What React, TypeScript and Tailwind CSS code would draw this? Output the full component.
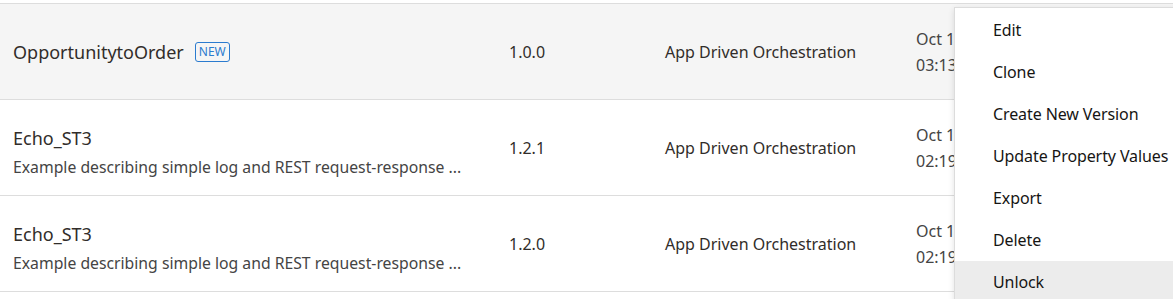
import { useState } from "react";

type Row = {
  name: string;
  desc?: string;
  isNew?: boolean;
  version: string;
  pattern: string;
  date: string;
  time: string;
};

const rows: Row[] = [
  { name: "OpportunitytoOrder", isNew: true, version: "1.0.0", pattern: "App Driven Orchestration", date: "Oct 1", time: "03:13" },
  {
    name: "Echo_ST3",
    desc: "Example describing simple log and REST request-response ...",
    version: "1.2.1",
    pattern: "App Driven Orchestration",
    date: "Oct 1",
    time: "02:19",
  },
  {
    name: "Echo_ST3",
    desc: "Example describing simple log and REST request-response ...",
    version: "1.2.0",
    pattern: "App Driven Orchestration",
    date: "Oct 1",
    time: "02:19",
  },
];

const actions = ["Edit", "Clone", "Create New Version", "Update Property Values", "Export", "Delete", "Unlock"];

function Badge() {
  return (
    <span className="ml-[11px] inline-flex h-[20px] items-center rounded-[3px] border border-[#2b7bcf] px-[3px] text-[12px] leading-none text-[#2b7bcf]">
      NEW
    </span>
  );
}

function ActionMenu() {
  const [hover, setHover] = useState("Unlock");
  return (
    <div className="absolute left-[954px] top-[7px] w-[240px] border border-[#dcdcdc] bg-white pt-[1px] shadow-[0_2px_6px_rgba(0,0,0,0.12)]">
      {actions.map((a) => (
        <div
          key={a}
          onMouseEnter={() => setHover(a)}
          className={`flex h-[42px] items-center pl-[38px] text-[16px] tracking-[-0.1px] text-[#161513] ${hover === a ? "bg-[#ececec]" : ""}`}
        >
          {a}
        </div>
      ))}
    </div>
  );
}

export default function App() {
  return (
    <div className="relative h-[299px] w-[1173px] overflow-hidden bg-white font-['Segoe_UI','Noto_Sans',sans-serif] text-[#312d2a]">
      <div className="pt-[3px]">
        <div className="border-t border-[#dddddd]">
          {rows.map((r, i) => (
            <div
              key={i}
              className={`grid h-[96px] grid-cols-[496px_156px_251px_1fr] items-center border-b border-[#dddddd] pl-[13px] ${i === 0 ? "bg-[#f5f5f5]" : "bg-white"}`}
            >
              <div className={r.desc ? "pt-[8px]" : ""}>
                <div className="flex items-center text-[18px] leading-[24px]">
                  {r.name}
                  {r.isNew && <Badge />}
                </div>
                {r.desc && <div className="mt-[6px] text-[15.75px] leading-[22px] text-[#444]">{r.desc}</div>}
              </div>
              <div className="text-[16px]">{r.version}</div>
              <div className="text-[16px]">{r.pattern}</div>
              <div className="text-[16px] leading-[26px] text-[#444]">
                <div>{r.date}</div>
                <div>{r.time}</div>
              </div>
            </div>
          ))}
        </div>
      </div>
      <ActionMenu />
    </div>
  );
}
